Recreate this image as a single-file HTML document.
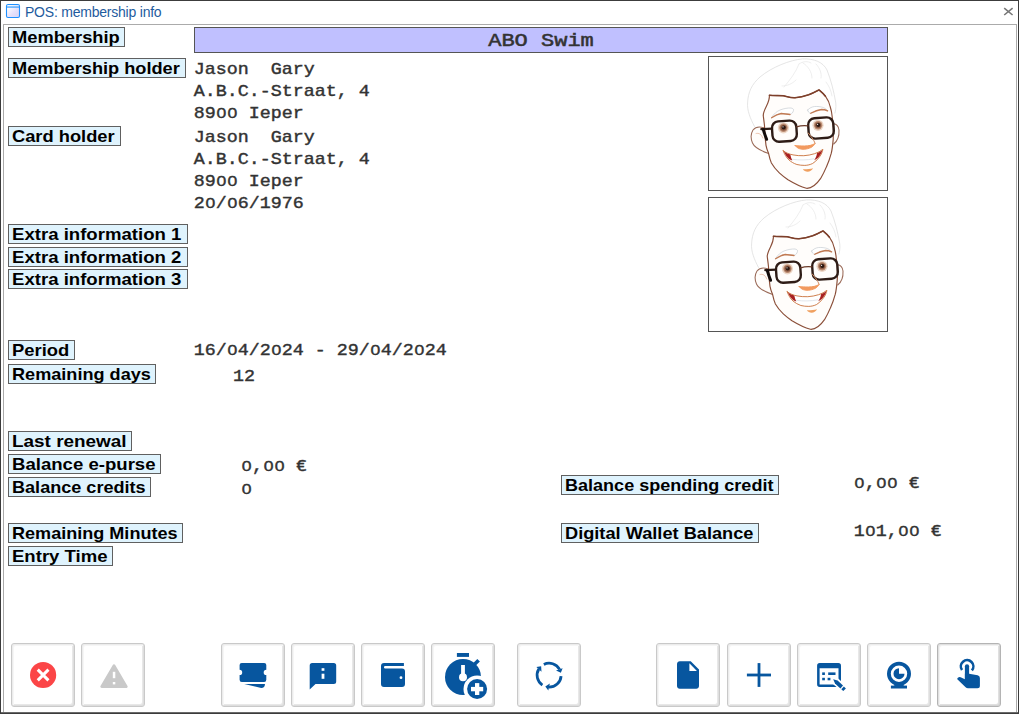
<!DOCTYPE html>
<html><head><meta charset="utf-8"><title>POS: membership info</title>
<style>
html,body{margin:0;padding:0}
body{width:1019px;height:714px;position:relative;overflow:hidden;background:#fff;font-family:"Liberation Sans",sans-serif}
#win{position:absolute;left:0;top:0;width:1017px;height:712px;border:1px solid #3c3c3c;background:#fff}
#bl{position:absolute;left:1px;top:712px;width:1017px;height:1px;background:#6a6a6a}
#panel{position:absolute;left:3px;top:24px;width:1012px;height:687px;border:1px solid #ababab;border-bottom:none;background:#fff}
#ttl{position:absolute;left:25px;top:3px;font-size:14px;line-height:18px;color:#1f5c9e;white-space:nowrap;letter-spacing:-0.22px}
.lb{position:absolute;height:18px;border:1px solid #606060;background:#dff3fd;font-weight:bold;font-size:17px;line-height:20px;color:#000;white-space:nowrap;overflow:visible}
.lb span{display:inline-block;transform-origin:0 50%;margin-left:3px}
#bar{position:absolute;left:194px;top:27px;width:692px;height:24px;border:1px solid #555;background:#c0c0ff;text-align:center}
#bar span{font-family:"Liberation Mono",monospace;font-weight:normal;-webkit-text-stroke:0.6px #333;font-size:22px;line-height:24px;color:#333;display:inline-block;transform:scaleY(.82);transform-origin:50% 100%}
.mn{position:absolute;font-family:"Liberation Mono",monospace;font-size:18.33px;line-height:22px;height:22px;color:#333;white-space:pre;transform:scaleY(.88);transform-origin:0 15.9px}
.z{display:inline-block;width:11px;text-align:center;font-family:"Liberation Sans",sans-serif;font-size:17.57px;line-height:0}
.mn.b{font-weight:normal;-webkit-text-stroke:0.45px #333}
.av{position:absolute;left:708px;width:178px;height:133px;border:1px solid #555;background:#fff}
.bt{position:absolute;top:643px;width:62px;height:62px;border:1px solid #c9c9c9;border-radius:3px;background:#fff;box-shadow:inset 1px 1px 0 #ececec,inset -1px -1px 0 #dedede,inset 2px 2px 0 #f6f6f6,inset -2px -2px 0 #e8e8e8}
.bt.last{border-color:#b4b4b4;box-shadow:inset 1px 1px 0 #e0e0e0,inset -1px -1px 0 #d4d4d4,inset 2px 2px 0 #f2f2f2,inset -2px -2px 0 #e0e0e0}
#ov{position:absolute;left:0;top:0;width:1019px;height:714px;pointer-events:none}
</style></head><body>
<div id="win"></div>
<div id="panel"></div>
<div id="bl"></div>
<svg style="position:absolute;left:5px;top:3px" width="16" height="16" viewBox="0 0 16 16"><defs><linearGradient id="ig" x1="0" y1="0" x2="1" y2="1"><stop offset="0.15" stop-color="#fff"/><stop offset="0.6" stop-color="#e4dffa"/><stop offset="1" stop-color="#d6d2f6"/></linearGradient></defs><rect x="1.5" y="1.5" width="13" height="13" rx="1.6" fill="url(#ig)" stroke="#1e90ff" stroke-width="1.1"/><path d="M2,3.25 H14" stroke="#b4dcff" stroke-width="0.7"/><path d="M2,4.1 H14" stroke="#1e90ff" stroke-width="1"/></svg>
<div id="ttl">POS: membership info</div>
<svg style="position:absolute;left:1003px;top:7px" width="11" height="9" viewBox="0 0 11 9"><path d="M1.2,1.2 L9.6,8 M9.6,1.2 L1.2,8" stroke="#777" stroke-width="1.6" fill="none"/></svg>
<div class="lb" style="left:8px;top:27px;width:115px"><span style="transform:scaleX(1.0759)">Membership</span></div>
<div class="lb" style="left:8px;top:58px;width:176px"><span style="transform:scaleX(1.0702)">Membership holder</span></div>
<div class="lb" style="left:8px;top:126px;width:111px"><span style="transform:scaleX(1.0755)">Card holder</span></div>
<div class="lb" style="left:8px;top:224px;width:178px"><span style="transform:scaleX(1.0930)">Extra information 1</span></div>
<div class="lb" style="left:8px;top:247px;width:178px"><span style="transform:scaleX(1.0930)">Extra information 2</span></div>
<div class="lb" style="left:8px;top:269px;width:178px"><span style="transform:scaleX(1.0930)">Extra information 3</span></div>
<div class="lb" style="left:8px;top:340px;width:65px"><span style="transform:scaleX(1.0813)">Period</span></div>
<div class="lb" style="left:8px;top:364px;width:146px"><span style="transform:scaleX(1.0652)">Remaining days</span></div>
<div class="lb" style="left:8px;top:431px;width:122px"><span style="transform:scaleX(1.1126)">Last renewal</span></div>
<div class="lb" style="left:8px;top:454px;width:151px"><span style="transform:scaleX(1.0929)">Balance e-purse</span></div>
<div class="lb" style="left:8px;top:477px;width:141px"><span style="transform:scaleX(1.0636)">Balance credits</span></div>
<div class="lb" style="left:8px;top:523px;width:173px"><span style="transform:scaleX(1.0622)">Remaining Minutes</span></div>
<div class="lb" style="left:8px;top:546px;width:103px"><span style="transform:scaleX(1.0913)">Entry Time</span></div>
<div class="lb" style="left:561px;top:475px;width:216px"><span style="transform:scaleX(1.0606)">Balance spending credit</span></div>
<div class="lb" style="left:561px;top:523px;width:196px"><span style="transform:scaleX(1.0705)">Digital Wallet Balance</span></div>

<div id="bar"><span>ABO Swim</span></div>
<div class="mn b" style="left:193.8px;top:59px">Jason&nbsp;&nbsp;Gary</div>
<div class="mn b" style="left:193.8px;top:81px">A.B.C.-Straat, 4</div>
<div class="mn b" style="left:193.8px;top:103px">89<span class="z">0</span><span class="z">0</span> Ieper</div>
<div class="mn b" style="left:193.8px;top:127px">Jason&nbsp;&nbsp;Gary</div>
<div class="mn b" style="left:193.8px;top:149px">A.B.C.-Straat, 4</div>
<div class="mn b" style="left:193.8px;top:171px">89<span class="z">0</span><span class="z">0</span> Ieper</div>
<div class="mn b" style="left:193.8px;top:193px">2<span class="z">0</span>/<span class="z">0</span>6/1976</div>
<div class="mn b" style="left:193.8px;top:340px">16/<span class="z">0</span>4/2<span class="z">0</span>24 - 29/<span class="z">0</span>4/2<span class="z">0</span>24</div>
<div class="mn b" style="left:233px;top:366px">12</div>
<div class="mn b" style="left:241.1px;top:456px"><span class="z">0</span>,<span class="z">0</span><span class="z">0</span> €</div>
<div class="mn b" style="left:241.1px;top:479px"><span class="z">0</span></div>
<div class="mn b" style="left:853.8px;top:473px"><span class="z">0</span>,<span class="z">0</span><span class="z">0</span> €</div>
<div class="mn b" style="left:853.8px;top:521px">1<span class="z">0</span>1,<span class="z">0</span><span class="z">0</span> €</div>

<div class="av" style="top:56px"></div>
<div class="av" style="top:197px"></div>
<div class="bt" style="left:11px"></div>
<div class="bt" style="left:81px"></div>
<div class="bt" style="left:221px"></div>
<div class="bt" style="left:291px"></div>
<div class="bt" style="left:361px"></div>
<div class="bt" style="left:431px"></div>
<div class="bt" style="left:517px"></div>
<div class="bt" style="left:656px"></div>
<div class="bt" style="left:727px"></div>
<div class="bt" style="left:797px"></div>
<div class="bt" style="left:867px"></div>
<div class="bt last" style="left:937px"></div>

<svg id="ov" width="1019" height="714" viewBox="0 0 1019 714">
<defs><g id="face" fill="none" stroke-linecap="round" stroke-linejoin="round">
<!-- hair -->
<path d="M754.5,126.5 C750,118 747,110 747.6,103 C748,92 752,84 760,77 C772,67 790,60 802.5,58.9 C814,58.5 823,62 827,70 C831,80 834,92 835.8,103 C836.2,108 835.5,111 834.9,113" stroke="#dedede" stroke-width="0.8"/>
<path d="M784,87 C790,80 796,72 799,64 M803,63 C808,66 812,72 812,78 M799,64 C803,61 808,61 811,63 M782,86 C787,86 792,84 796,80 M816,64 C820,68 822,74 821,78 M826,82 C829,86 831,90 832,96" stroke="#e6e6e6" stroke-width="0.7"/>
<!-- ears -->
<path d="M764,128 C760,126.500 755.7,126.800 753,130 C750.500,134 750.800,139 752.500,143 C754.500,147.500 760,150.500 768,153.200" stroke="#9a6a58" stroke-width="1.05" fill="#fffdfb"/>
<path d="M756,133.500 C759,132.500 761.500,134.500 762.800,138" stroke="#e9b9a0" stroke-width="0.8"/>
<path d="M833.500,123.700 C836.500,124 838.600,126.500 839,130 C839.300,135 837.500,141 833.700,144" stroke="#9a6a58" stroke-width="1.05" fill="#fffdfb"/>
<!-- face -->
<path d="M763.300,116 C762.800,113.500 764.500,110 766.500,106 C768.500,102 769.600,98.500 769.400,95.300 C774,95.800 779,95.400 783.200,95.700 C787,96.500 791,98 795,97.700 C800,97.300 804.500,96.200 808.700,94.800 C812.500,93.400 816,91.500 819,89.900 C821.500,92 823.800,94 825.400,96.200 C827.800,99.500 829.500,103 830.300,107 C831.300,110 831.900,113.500 832.200,116.800 C833.400,124 833.700,132 833.200,139.400 C832.800,144 832.300,149 831.300,153.200 C830,158 828.500,162.500 826.400,166.900 C824.700,171 822.700,175 820.500,178.700 C816.500,184.500 811,188.600 806.400,188.300 C800,186.500 793.500,183 788,179.700 C784.800,177.500 782,175.300 779.300,172.800 C776,169.800 773.400,166.500 771.400,163 C770,160 769.200,156.500 768.500,153.200 C767.300,150.500 766.500,148 766,145.300 C765,139 764.600,132 764.500,125.700 C764.200,122.500 763.700,119 763.300,116 Z" stroke="#8a4e38" stroke-width="1.15" fill="#fffdfb"/>
<path d="M769.400,95.300 C774,95.800 779,95.400 783.200,95.700 C787,96.500 791,98 795,97.700 C800,97.300 804.500,96.200 808.700,94.800 C812.500,93.400 816,91.500 819,89.900 C821.500,92 823.800,94 825.400,96.200" stroke="#7d3f2a" stroke-width="1.5"/>
<!-- eyebrows -->
<path d="M771.400,117.800 C774,113.500 777,111.300 780,110 C784,108.500 788,107.800 791,108 C793,108.300 794,109.500 793.500,110.500 C793,112.500 791.800,114 790,114.400 C787,114.200 784,113.500 781.200,113.400 C777.500,114 774,116 771.400,117.800 Z" stroke="#c7cdd3" stroke-width="0.7" fill="#fff"/>
<path d="M771.600,117.700 C774.500,115.800 777.800,114 781.200,113.500 C784,113.600 787,114.300 790,114.500" stroke="#c27a52" stroke-width="1.3"/>
<path d="M807.700,110 C809.500,108 812,106.800 814.600,106.500 C817.500,106.300 820.600,106.700 823.400,107.500 C825.200,108.300 826.800,109.500 827.800,111 C825.800,110 823.600,109.600 821.500,109.500 C817.500,110 813.800,111.800 810.700,113.400 C809,113 807.700,111.500 807.700,110 Z" stroke="#c7cdd3" stroke-width="0.7" fill="#fff"/>
<path d="M810.700,113.300 C813.800,111.600 817.500,109.900 821.500,109.500 C823.600,109.500 825.800,110 827.600,110.900" stroke="#c27a52" stroke-width="1.3"/>
<!-- eyes -->
<circle cx="783.400" cy="127.800" r="5.600" fill="#ecd6c6" stroke="none"/>
<circle cx="783.500" cy="127.700" r="4.200" fill="#b98a70" stroke="none"/><circle cx="783.500" cy="127.700" r="3" fill="#8c5a42" stroke="none"/>
<circle cx="783.700" cy="127.500" r="2" fill="#2a1610" stroke="none"/>
<circle cx="783" cy="126.800" r="0.600" fill="#fff" stroke="none"/>
<circle cx="818" cy="125.300" r="5.600" fill="#ecd6c6" stroke="none"/>
<circle cx="818.100" cy="125.200" r="4.200" fill="#b98a70" stroke="none"/><circle cx="818.100" cy="125.200" r="3" fill="#8c5a42" stroke="none"/>
<circle cx="818.300" cy="125" r="2" fill="#2a1610" stroke="none"/>
<circle cx="817.600" cy="124.300" r="0.600" fill="#fff" stroke="none"/>
<!-- glasses -->
<rect x="-12.200" y="-10.200" width="24.400" height="20.400" rx="6.5" transform="translate(784.400,131.200) rotate(-4)" stroke="#2e1c16" stroke-width="2.400"/>
<rect x="-12.600" y="-10.200" width="25.200" height="20.400" rx="6.5" transform="translate(821,128) rotate(-4)" stroke="#2e1c16" stroke-width="2.400"/>
<path d="M796.700,126.900 C800,125.800 804,125.500 807.900,125.900" stroke="#6b3a28" stroke-width="1.300"/>
<path d="M772,128.600 L761.300,129.200" stroke="#2b1a14" stroke-width="2.200"/>
<path d="M763.400,129.800 C764.300,133 765.500,136.500 766.600,139.300" stroke="#140c0a" stroke-width="3"/>
<!-- nose -->
<path d="M808.300,133 C810.500,136 813.800,139.500 815.200,143.500" stroke="#d08a62" stroke-width="1"/>
<path d="M795.200,145.600 C797,148.500 801,149.600 804.500,149.200 C809,148.800 813.500,147 814.800,143.600 C812.500,145.200 808.500,146 804.500,146 C801,146 797.500,146 795.200,145.600 Z" fill="#f2995e" stroke="#f2995e" stroke-width="1"/>
<!-- mouth -->
<path d="M783.200,150.700 C786,153 789.500,154.200 793,154.900 C796.500,155.600 800,155.800 803.800,155.700 C807.500,155.500 811,154.800 814.600,153.700 C817.800,152.700 820.500,151.200 822.900,149.300 C822.300,152.700 820.800,155.500 818.500,158.100 C816.800,160.300 814.800,162.200 812.600,163.500 C810.200,164.700 807.500,165.300 804.800,165.400 C802,165.400 799.300,165.100 796.900,164.500 C793.800,163.500 791.200,161.900 789,160 C786.300,157.500 784.400,154.300 783.200,150.700 Z" fill="#fff" stroke="#c8703a" stroke-width="0.900"/>
<path d="M784,151.600 C786,153.200 788.300,154.100 790.300,154.600 C790.600,156.500 791.300,158.600 792.300,160.600 C790.800,160 789.800,159.500 789,158.900 C786.600,156.900 785,154.400 784,151.600 Z" fill="#a82020" stroke="none"/>
<path d="M822.300,150.300 C820.600,151.600 818.800,152.500 817,153.200 C816.800,155.500 815.800,158 814.200,160.300 C815.800,159.500 817.200,158.500 818.300,157.400 C820.300,155.300 821.600,153 822.300,150.300 Z" fill="#a82020" stroke="none"/>
<path d="M792.500,159.300 C799,160.300 807,160.200 813.800,158.800" stroke="#d5dbe2" stroke-width="0.700"/>
<path d="M802.800,169.300 C806,169.500 810,169 813.100,168.300 C811.800,170.500 809.800,171.700 807.700,171.800 C805.600,171.700 803.800,170.700 802.800,169.300 Z" fill="#f0a060" stroke="none"/>
</g>
</defs>
<use href="#face" x="0" y="0"/>
<use href="#face" x="4" y="141"/>
<g id="icons">
<circle cx="43.1" cy="675" r="13.1" fill="#fb4547"/><path d="M37.75,669.65 L48.45,680.35 M48.45,669.65 L37.75,680.35" stroke="#fff" stroke-width="3" fill="none"/>
<path d="M114,665.7 L126.3,686.6 L101.7,686.6 Z" fill="#c9c9c9" stroke="#c9c9c9" stroke-width="2.8" stroke-linejoin="round"/><rect x="112.8" y="671.8" width="2.5" height="6.4" fill="#fff"/><rect x="112.8" y="682" width="2.5" height="2.4" fill="#fff"/>
<path d="M241.8,662.9 H264.1 a2.2,2.2 0 0 1 2.2,2.2 V669.8 a2.6,2.6 0 0 0 0,5.2 V679.7 a2.2,2.2 0 0 1 -2.2,2.2 H241.8 a2.2,2.2 0 0 1 -2.2,-2.2 V675 a2.6,2.6 0 0 0 0,-5.2 V665.1 a2.2,2.2 0 0 1 2.2,-2.2 Z" fill="#07569f"/><path d="M244.2,684 H265 Q264.9,687.8 261.2,688.1 Z" fill="#07569f"/>
<path d="M312.2,662.9 H333.7 a2.5,2.5 0 0 1 2.5,2.5 V681.6 a2.5,2.5 0 0 1 -2.5,2.5 H315.5 L309.7,689.6 V665.4 a2.5,2.5 0 0 1 2.5,-2.5 Z" fill="#07569f"/><rect x="321.6" y="668.2" width="2.8" height="2.6" fill="#fff"/><rect x="321.6" y="673.7" width="2.8" height="5.1" fill="#fff"/>
<path d="M384,662.9 H403.9 V665.9 H385.2 a1.25,1.25 0 0 0 0,2.5 H402 a3,3 0 0 1 3,3 V684 a3,3 0 0 1 -3,3 H384 a3,3 0 0 1 -3,-3 V665.9 a3,3 0 0 1 3,-3 Z" fill="#07569f"/><circle cx="401" cy="677.7" r="1.4" fill="#fff"/>
<rect x="456.9" y="653" width="12.1" height="3.9" fill="#07569f"/><circle cx="463" cy="677" r="18" fill="#07569f"/><path d="M474.3,664.5 L478.6,660.2" stroke="#07569f" stroke-width="3.6" fill="none"/><rect x="461.1" y="665" width="3.8" height="12" fill="#fff"/><circle cx="463" cy="677.2" r="4" fill="#fff"/><circle cx="477.1" cy="689" r="13.6" fill="#fff"/><circle cx="477.1" cy="689" r="10" fill="#07569f"/><rect x="471" y="686.9" width="12.2" height="4.4" fill="#fff"/><rect x="475" y="683.1" width="4.3" height="11.9" fill="#fff"/>
<path d="M543.84,664.41 A12.0,12.0 0 0 1 559.60,669.38" stroke="#07569f" stroke-width="2.8" fill="none"/><path d="M555.98,670.38 L562.64,668.30 L560.86,672.81 Z" fill="#07569f"/><path d="M561.07,676.04 A12.0,12.0 0 0 1 548.89,687.20" stroke="#07569f" stroke-width="2.8" fill="none"/><path d="M549.83,683.57 L548.30,690.38 L545.29,686.58 Z" fill="#07569f"/><path d="M542.39,685.15 A12.0,12.0 0 0 1 538.81,669.02" stroke="#07569f" stroke-width="2.8" fill="none"/><path d="M541.49,671.65 L536.35,666.92 L541.15,666.21 Z" fill="#07569f"/>
<path transform="translate(671.5,658.5) scale(1.375)" d="M6 2c-1.1 0-1.99.9-1.99 2L4 20c0 1.1.89 2 1.99 2H18c1.1 0 2-.9 2-2V8l-6-6H6zm7 7V3.5L18.500 9H13z" fill="#07569f" fill-rule="evenodd"/>
<rect x="746.9" y="673.6" width="24.1" height="2.8" fill="#07569f"/><rect x="757.6" y="663.1" width="2.8" height="23.8" fill="#07569f"/>
<path d="M819.7,663.1 H838.4 a2.6,2.6 0 0 1 2.6,2.6 V684.3 a2.6,2.6 0 0 1 -2.6,2.6 H819.7 a2.6,2.6 0 0 1 -2.6,-2.6 V665.7 a2.6,2.6 0 0 1 2.6,-2.6 Z M819.6,668.2 V684.5 H838.5 V668.2 Z" fill="#07569f" fill-rule="evenodd"/><rect x="822.2" y="672.4" width="2.7" height="2.6" fill="#07569f"/><rect x="828.2" y="672.4" width="7.3" height="2.6" fill="#07569f"/><rect x="822.2" y="677.8" width="2.7" height="2.5" fill="#07569f"/><rect x="827.6" y="677.8" width="2.8" height="2.5" fill="#07569f"/><path d="M833,679.2 L847,691" stroke="#fff" stroke-width="7.5" fill="none"/><path d="M833.2,679.3 L837.6,680.6 L843,685.6 L840.4,688.4 L835,683.4 Z" fill="#07569f"/><path d="M843.9,686.5 L845.9,688.4 L843.3,691.1 L841.3,689.3 Z" fill="#07569f"/>
<circle cx="899" cy="673.7" r="10.1" stroke="#07569f" stroke-width="3.8" fill="none"/><path d="M899,673.7 L904.5,673.7 A5.5,5.5 0 1 1 899,668.2 Z" fill="#07569f"/><rect x="890.9" y="685.6" width="16.1" height="2.9" fill="#07569f"/><path d="M895.2,684 H902.8 L904,686 H894 Z" fill="#07569f"/>
<path d="M962.04,670.07 A6.25,6.25 0 1 1 971.89,670.42" stroke="#07569f" stroke-width="2.6" fill="none"/><rect x="964.9" y="664.2" width="4.2" height="18" rx="2.1" fill="#07569f"/><path d="M969.1,673.8 L977.6,675.3 Q979.9,675.8 979.9,678 L979.9,685.7 Q979.9,688.2 977.4,688.2 L968,688.2 Q966.6,688.2 965.6,687.2 L957.3,679.2 Q957,678.2 958.2,677.4 Q959.4,676.6 960.6,677.2 L964.9,679.2 L964.9,673.8 Z" fill="#07569f"/>
</g>
</svg>
</body></html>
